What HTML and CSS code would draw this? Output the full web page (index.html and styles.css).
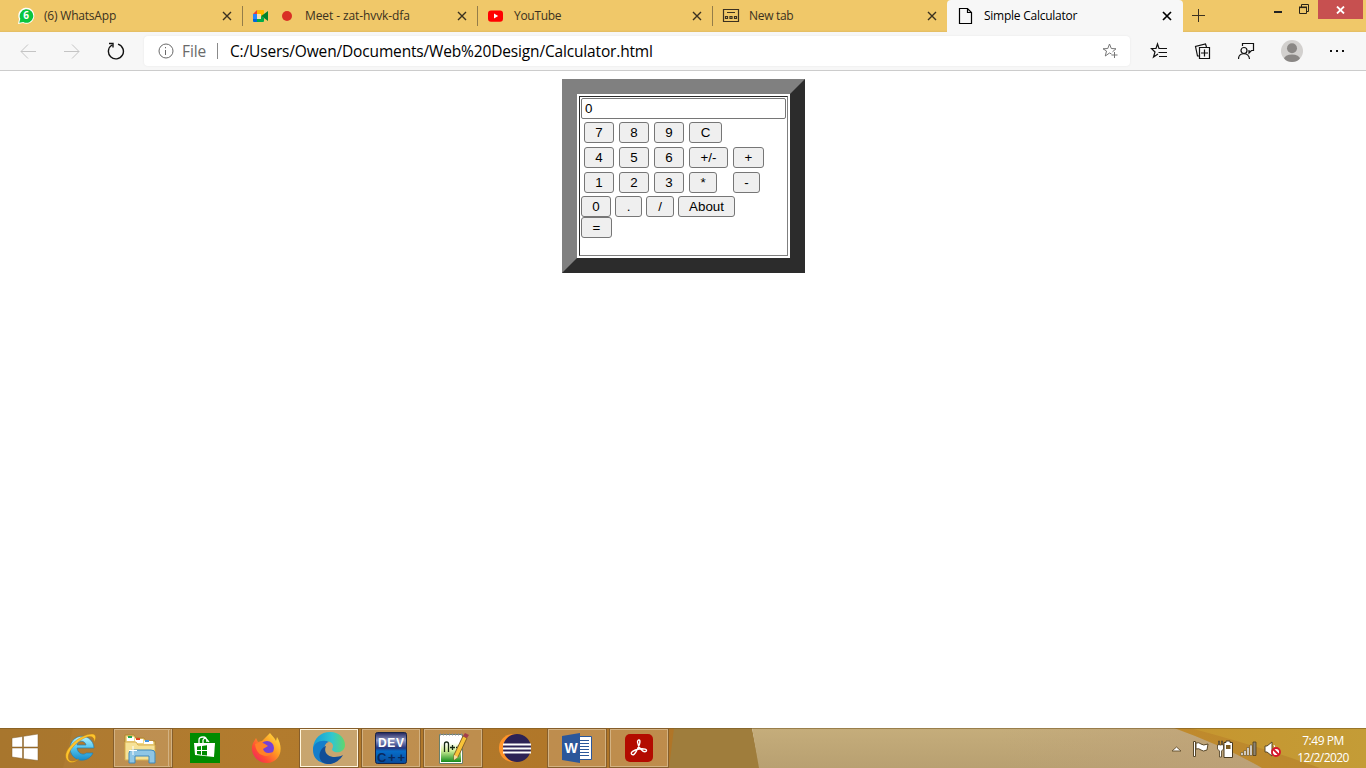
FILE: index.html
```html
<!DOCTYPE html>
<html lang="en">
<head>
<meta charset="utf-8">
<title>Simple Calculator</title>
<link rel="stylesheet" href="styles.css">
</head>
<body>
<header class="tabs">
  <div class="tab">
    <svg class="fav" width="18" height="18" viewBox="0 0 18 18"><path d="M1 17l1-5A8 8 0 1 1 6 16z" fill="#fff"/><path d="M2.3 15.8l1-4A6.8 6.8 0 1 1 6.3 15z" fill="#09c53e"/><text x="9" y="12.3" text-anchor="middle" class="badge">6</text></svg>
    <span class="title t1">(6) WhatsApp</span>
    <svg class="close" width="10" height="10" viewBox="0 0 10 10"><path d="M1 1l8 8M9 1L1 9"/></svg>
  </div>
  <div class="tab meet">
    <svg class="fav" width="18" height="18" viewBox="0 0 18 18"><path d="M1 7l4-4v4z" fill="#ea4335"/><path d="M1 7h4v5H1z" fill="#2684fc"/><path d="M1 12h4v3H2q-1 0-1-1z" fill="#0066da"/><path d="M5 3h6q1 0 1 1v3L9 10V7H5z" fill="#ffba00"/><path d="M5 12h4V9l3 2v3q0 1-1 1H5z" fill="#00ac47"/><path d="M12 7l4-3v10l-4-3-3-2z" fill="#00832d"/><path d="M5 7h4v5H5z" fill="#f4deb0"/></svg>
    <i class="record"></i>
    <span class="title t2">Meet - zat-hvvk-dfa</span>
    <svg class="close" width="10" height="10" viewBox="0 0 10 10"><path d="M1 1l8 8M9 1L1 9"/></svg>
  </div>
  <div class="tab">
    <svg class="fav" width="18" height="18" viewBox="0 0 18 18"><rect x="1" y="3.5" width="15" height="11.2" rx="3" fill="#f00"/><path d="M7 6.5l4.2 2.6L7 11.6z" fill="#fff"/></svg>
    <span class="title t3">YouTube</span>
    <svg class="close" width="10" height="10" viewBox="0 0 10 10"><path d="M1 1l8 8M9 1L1 9"/></svg>
  </div>
  <div class="tab">
    <svg class="fav" width="18" height="18" viewBox="0 0 18 18" fill="none" stroke="#3b3120"><path stroke-width="1.2" d="M1.500 2.500h15v12h-15zM5 5.500h8M3.500 9.500h2v2h-2zM8 9.500h2v2H8zM12.500 9.500h2v2h-2z"/></svg>
    <span class="title t4">New tab</span>
    <svg class="close" width="10" height="10" viewBox="0 0 10 10"><path d="M1 1l8 8M9 1L1 9"/></svg>
  </div>
  <div class="tab active">
    <svg class="fav" width="18" height="18" viewBox="0 0 18 18" fill="none" stroke="#000" stroke-width="1.2"><path d="M2.500 1.500h8l4 4v11h-12zM10.500 1.500v4h4"/></svg>
    <span class="title t5">Simple Calculator</span>
    <svg class="close" width="10" height="10" viewBox="0 0 10 10"><path d="M1 1l8 8M9 1L1 9"/></svg>
  </div>
  <svg class="plus" width="13" height="13" viewBox="0 0 13 13"><path d="M6.500 0v13M0 6.500h13" stroke="#3b3120"/></svg>
  <div class="window">
    <svg width="8" height="14" viewBox="0 0 8 14"><path d="M0 11h8v2H0z" fill="#222"/></svg>
    <svg width="11" height="11" viewBox="0 0 11 11" fill="none" stroke="#2a2418"><path d="M.5 3.500h7v6h-7zM2.500 3V.5h7v7H8"/><path d="M0 3.300h8" stroke-width="1.600"/></svg>
    <div class="shut"><svg width="9" height="8" viewBox="0 0 9 8"><path d="M1 .5l7 7M8 .5l-7 7" stroke="#fff" stroke-width="1.800"/></svg></div>
  </div>
</header>
<nav class="toolbar">
  <svg class="back" width="16" height="16" viewBox="0 0 16 16"><path d="M16 8.500H1M8 1.500l-7 7 7 7"/></svg>
  <svg class="forward" width="16" height="16" viewBox="0 0 16 16"><path d="M0 8.500h15M8 1.500l7 7-7 7"/></svg>
  <svg class="reload" width="18" height="18" viewBox="0 0 18 18"><path d="M11 2.200A7.500 7.500 0 1 1 5 3M2 1.500h4v4"/></svg>
  <div class="address">
    <svg width="16" height="16" viewBox="0 0 16 16" fill="none" stroke="#6a6a6a"><circle cx="8" cy="8" r="7"/><path d="M7.500 7v5M7.500 4v1.300"/></svg>
    <span class="scheme">File</span><i></i><span class="url">C:/Users/Owen/Documents/Web%20Design/Calculator.html</span>
    <svg class="star" width="16" height="16" viewBox="0 0 16 16" fill="none" stroke="#767676"><path d="M9.500 11L7.500 10l-4.200 3 1.200-5L1 5.800l4.800-.3L7.500 1l1.800 4.500 4.700.3-3.500 3M12.500 9v6M9.500 12h6"/></svg>
  </div>
  <div class="actions">
    <svg width="18" height="18" viewBox="0 0 18 18"><path d="M8 12L3.500 15 5 10 1.500 6.500H6l1.500-4.500L9 6.500h8M8.500 10.500H17M9 14.500h8"/></svg>
    <svg width="18" height="18" viewBox="0 0 18 18"><path d="M5.500 5.500h10v11h-10zM10.500 7.500v7M7 11h7M5 14L3.500 14 1.500 4.500l10-2.500 1 3"/></svg>
    <svg width="18" height="18" viewBox="0 0 18 18"><circle cx="6" cy="8.500" r="3"/><path d="M.5 17c0-7 10.500-7 11 0M4.500 4V1.500h11v7h-2l-2.500 2.500v-3"/></svg>
    <svg class="avatar" width="22" height="22" viewBox="0 0 22 22"><defs><clipPath id="face"><circle cx="11" cy="11" r="11"/></clipPath></defs><circle cx="11" cy="11" r="11" fill="#d2d0ce"/><g clip-path="url(#face)" fill="#8a8785"><circle cx="11" cy="8.300" r="5"/><ellipse cx="11" cy="19" rx="8" ry="4.500"/></g></svg>
    <svg class="more" width="16" height="4" viewBox="0 0 16 4"><path d="M1 1h2v2H1zM7 1h2v2H7zM13 1h2v2h-2z"/></svg>
  </div>
</nav>
<main>
  <form class="calculator">
    <div class="cell">
      <input class="display" type="text" value="0">
      <div class="keys"><button type="button" class="digit">7</button><button type="button" class="digit">8</button><button type="button" class="digit">9</button><button type="button" class="clear">C</button></div>
      <div class="keys"><button type="button" class="digit">4</button><button type="button" class="digit">5</button><button type="button" class="digit">6</button><button type="button" class="sign">+/-</button><button type="button" class="add">+</button></div>
      <div class="keys"><button type="button" class="digit">1</button><button type="button" class="digit">2</button><button type="button" class="digit">3</button><button type="button" class="times">*</button><button type="button" class="minus">-</button></div>
      <div class="bottom"><button type="button" class="digit">0</button><button type="button" class="dot">.</button><button type="button" class="divide">/</button><button type="button" class="about">About</button></div>
      <button type="button" class="add">=</button>
    </div>
  </form>
</main>
<footer class="taskbar">
  <svg class="wallpaper" width="1366" height="40" viewBox="0 0 1366 40">
    <defs>
      <linearGradient id="wood"><stop offset="0" stop-color="#ad7a32"/><stop offset=".4" stop-color="#b27b2d"/><stop offset="1" stop-color="#b07527"/></linearGradient>
      <linearGradient id="sand" x2="0" y2="1"><stop offset="0" stop-color="#c5ad7b"/><stop offset="1" stop-color="#b8a071"/></linearGradient>
      <linearGradient id="rose"><stop offset="0" stop-color="#bda079" stop-opacity="0"/><stop offset="1" stop-color="#bda17a"/></linearGradient>
      <linearGradient id="edge"><stop offset="0" stop-color="#c08a2c"/><stop offset="1" stop-color="#b9882f"/></linearGradient>
      <linearGradient id="gold"><stop offset="0" stop-color="#c6962f"/><stop offset="1" stop-color="#c49c37"/></linearGradient>
    </defs>
    <path fill="url(#wood)" d="M0 0h680v40H0z"/><path fill="#a06c25" opacity=".3" d="M0 0h73L63 40H0z"/>
    <path fill="#9f7d3c" d="M674 0h78l8 40h-91z"/><path fill="url(#sand)" d="M752 0h614v40H759z"/><path fill="url(#rose)" d="M1000 0h366v40h-366z"/>
    <path fill="url(#edge)" d="M1174 0h192v40h-104q-38-22-88-40z"/><path fill="url(#gold)" d="M1190 0h176v40h-46q-55-20-130-40z"/>
    <path d="M0 .5h1366" stroke="#70521f" opacity=".5"/>
  </svg>
  <div class="apps">
    <div class="start"><svg width="28" height="28" viewBox="0 0 28 28"><path d="M1 4l10.500-1.500V13H1zM12.500 2.300L27 0v13H12.500zM1 14h10.500v10.500L1 23zM12.500 14H27v12.500L12.500 24.700z" fill="#fff" stroke="#815c29" stroke-width=".5"/></svg></div>
    <div class="app"><svg width="34" height="34" viewBox="0 0 34 34"><defs><linearGradient id="ie" x2="0" y2="1"><stop stop-color="#b7f4ff"/><stop offset=".5" stop-color="#52c4ee"/><stop offset="1" stop-color="#188bc9"/></linearGradient></defs><path d="M29 22A12 12 0 1 1 30 17H13c1 7 8 7 9 5zM13 14h9c-1-5-8-5-9 0z" fill="url(#ie)" stroke="#267ead" stroke-width=".7" fill-rule="evenodd"/><path d="M4 30C-5 22 15 3 28 3c5 0 4 5 2 8 1-7-6-7-13-2C8 15 2 24 5 29q3 3 10-1-7 6-11 2z" fill="#ffc52c" stroke="#b67a12" stroke-width=".4"/></svg></div>
    <div class="app open stack"><svg width="34" height="34" viewBox="0 0 34 34"><path d="M2 4h9l2 3h8l2 3h9v18H2z" fill="#efd887" stroke="#b1852c"/><path d="M4 6h7v4H4zM12 8h8v4h-8zM21 10h9v3h-9z" fill="#fff"/><path d="M5 5h4v2H5z" fill="#26a950"/><path d="M13 7h4v2h-4z" fill="#df4321"/><path d="M22 9h4v2h-4z" fill="#4193df"/><path d="M2 11h11l2 3h17v15H2z" fill="#f6e296" stroke="#d7ae50"/><path d="M6 32V22q0-3 4-3h18q4 0 4 3v10h-6v-7H12v7z" fill="#8fc6e5" stroke="#3f87b9"/><path d="M10 15v9M6 19.500h8" stroke="#fff"/></svg></div>
    <div class="app"><svg width="30" height="30" viewBox="0 0 30 30"><path fill="#008b00" d="M0 0h30v30H0z"/><path d="M4 10h21l-1 14-19-2z" fill="#fff"/><path d="M9 10V7q0-3 4-3t4 5M13 10V7q2-4 6 2" fill="none" stroke="#fff" stroke-width="1.300"/><path d="M7 13.500l4-.5v4H7zM12 12.900l5-.6V17h-5zM7 18h4v3.700L7 21zM12 18h5v4.500l-5-.5z" fill="#008b00"/></svg></div>
    <div class="app"><svg width="34" height="34" viewBox="0 0 34 34"><defs><linearGradient id="fox" x1="1" x2="0" y2="1"><stop stop-color="#fff14d"/><stop offset=".4" stop-color="#ff9c22"/><stop offset=".7" stop-color="#ff4b35"/><stop offset="1" stop-color="#e71874"/></linearGradient></defs><path d="M3 12l3-5 2 4 4-1 8-8c2 3 5 5 6 8l1-4c8 13 2 26-10 26C6 32-1 21 3 12z" fill="url(#fox)"/><circle cx="17" cy="17" r="7" fill="#7542d5"/><path d="M5 13q6-3 10 0l3 2-5 3q2 6 10 3-4 6-11 3-6-2-7-11z" fill="#ff8128"/></svg></div>
    <div class="app open focused"><svg width="34" height="34" viewBox="0 0 34 34"><defs><linearGradient id="ed"><stop stop-color="#159bd7"/><stop offset=".6" stop-color="#31c7cf"/><stop offset="1" stop-color="#61d76b"/></linearGradient></defs><path d="M1 17C2 7 9 1 18 1c10 0 15 7 15 13 0 7-8 9-12 6-2-2 0-2 0-5 0-4-6-6-11-3-4 2-8 5-9 9z" fill="url(#ed)"/><path d="M1 19c0-8 10-11 16-8-6 1-8 14 3 19q-4 4-9 2C4 30 1 25 1 19z" fill="#147ecb"/><path d="M14 15c-4 9 7 14 17 9-4 7-13 12-21 7-5-5-2-14 4-16z" fill="#124d96"/></svg></div>
    <div class="app open"><svg width="32" height="32" viewBox="0 0 32 32"><defs><linearGradient id="dev" x2="0" y2="1"><stop stop-color="#21225a"/><stop offset=".25" stop-color="#8d97c4"/><stop offset=".5" stop-color="#27357c"/><stop offset=".6" stop-color="#066dc9"/><stop offset="1" stop-color="#084a99"/></linearGradient></defs><rect x=".5" y=".5" width="31" height="31" rx="2" fill="url(#dev)" stroke="#182445"/><text x="16" y="15" class="dev" textLength="26">DEV</text><text x="16" y="30" class="cpp" textLength="28">C++</text></svg></div>
    <div class="app open"><svg width="34" height="34" viewBox="0 0 34 34"><defs><linearGradient id="leaf" x2="0" y2="1"><stop stop-color="#fff"/><stop offset=".4" stop-color="#d4f09a"/><stop offset="1" stop-color="#128b1b"/></linearGradient></defs><path d="M3.500 3.500h23v29h-23z" fill="#fff" stroke="#697f6b"/><path d="M5 12h20v19H5z" fill="url(#leaf)"/><path d="M4 3.500h23" stroke="#889" stroke-width="2" stroke-dasharray="1 2"/><path d="M8.500 21v-8q0-2 2-2t2 2v8M14 16.500h5M16.500 14v5M20 16.500h5M22.500 14v5" stroke="#172817" fill="none" stroke-width="1.300"/><path d="M18 29v-5L27 5l4 2-9 19z" fill="#f9c438" stroke="#896329"/><path d="M18 29v-5l4 2z" fill="#f5dba2"/><path d="M27 5l2-3 4 2-2 3z" fill="#a43e4b"/></svg></div>
    <div class="app"><svg width="34" height="34" viewBox="0 0 34 34"><circle cx="15" cy="17" r="14" fill="#ff9429"/><circle cx="19" cy="17" r="14" fill="#2c2255"/><path d="M5 13.500h28M5 17.500h28M5 21.500h28" stroke="#fff" stroke-width="2"/></svg></div>
    <div class="app open"><svg width="32" height="32" viewBox="0 0 32 32"><path d="M17 4.500h13.500v23H17z" fill="#fff" stroke="#2b579a"/><path d="M19 8.500h9M19 11.500h9M19 14.500h9M19 17.500h9M19 20.500h9M19 23.500h9" stroke="#2b579a"/><path d="M1 4l18-3v30L1 28z" fill="#2b579a"/><text x="10" y="20.500" class="word">W</text></svg></div>
    <div class="app open"><svg width="28" height="28" viewBox="0 0 28 28"><rect width="28" height="28" rx="5" fill="#b30b00"/><path d="M7 20.500c-2.500-2 2-4.500 7-5.500 5-.8 9 .5 7 2.400-3 1.600-8-4.400-8.500-9.400 0-3 3.500-3 2 2-1.500 4.500-5 12.500-7.500 10.500z" fill="none" stroke="#fff" stroke-width="1.400"/></svg></div>
  </div>
  <div class="tray">
    <svg width="9" height="6" viewBox="0 0 9 6"><path d="M0 5l4.500-4L9 5z" fill="#fff" stroke="#6b5635"/></svg>
    <svg width="18" height="18" viewBox="0 0 18 18"><path d="M1.500 1.500h2v15h-2zM4 3q3-1 5 1t7 0l-1 6q-4 2-6 0T4 9z" fill="#fff" stroke="#594829"/></svg>
    <svg width="18" height="18" viewBox="0 0 18 18"><path d="M2.500 1v4h-1v4l2 2v6h2v-6l2-2V5h-1V1h-1v4h-2V1z" fill="#fff" stroke="#4a3b20" stroke-width=".8"/><path d="M8 2.500h2V1h4v1.500h2.500v15H8z" fill="#fff" stroke="#4a3b20"/><path d="M10 5h4.500v4H10z" fill="#7d5c20"/></svg>
    <svg width="18" height="18" viewBox="0 0 18 18"><path d="M1 12.500h2v3H1zM4 10.500h2v5H4zM7 7.500h2v8H7zM10 5h2v10.500h-2z" fill="#fff" stroke="#5b4a2b" stroke-width=".6"/><path d="M13 2h3v13.500h-3z" fill="#8d8471" stroke="#4c3c20" stroke-width=".8"/></svg>
    <svg width="18" height="18" viewBox="0 0 18 18"><path d="M1 6h2l5-4v14l-5-4H1z" fill="#fff" stroke="#594829"/><path d="M10 5q3 4 0 8" fill="none" stroke="#fff"/><circle cx="12" cy="12" r="4" fill="#fff" stroke="#d71729" stroke-width="1.800"/><path d="M9 9l6 6" stroke="#d71729" stroke-width="1.800"/></svg>
    <div class="clock"><span class="time">7:49 PM</span><span class="date">12/2/2020</span></div>
  </div>
</footer>
</body>
</html>
```
FILE: styles.css
```css
* { box-sizing: border-box; }
body { margin: 0; width: 1366px; height: 768px; overflow: hidden; display: flex; flex-direction: column; background: #fff; font-family: "Open Sans", sans-serif; }
svg { display: block; flex-shrink: 0; }
.tabs { height: 32px; flex: none; display: flex; padding-left: 8px; background: linear-gradient(#f0c869 30px, #e2bc63); }
.tab { width: 235px; height: 32px; display: flex; align-items: center; padding: 0 11px 0 9px; position: relative; color: #3b3120; font-size: 12px; }
.tab:not(.active):not(:nth-child(4))::after { content: ""; position: absolute; right: 0; top: 6px; width: 1px; height: 20px; background: #947d49; }
.fav { margin-right: 9px; }
.badge { font: bold 10px "Open Sans", sans-serif; fill: #fff; }
.title { flex: 1; white-space: nowrap; line-height: 32px; }
.t1 { letter-spacing: -.2px; }
.t2 { letter-spacing: -.1px; }
.t3 { letter-spacing: -.3px; }
.t4 { letter-spacing: -.3px; }
.t5 { letter-spacing: -.25px; }
.close { stroke: #3b3120; stroke-width: 1.4; fill: none; }
.record { width: 10px; height: 10px; border-radius: 50%; background: #d93025; margin: 0 13px 0 3px; }
.active { width: 236px; background: #f7f7f7; color: #000; border-radius: 4px 4px 0 0; margin-left: -1px; padding-left: 10px; }
.active .close { stroke: #000; stroke-width: 1.7; }
.plus { margin: 9px 0 0 9px; }
.window { display: flex; align-items: flex-start; margin-left: auto; padding-right: 3px; }
.window > svg:nth-child(2) { margin: 4px 8px 0 17px; }
.shut { width: 45px; height: 19px; background: #c75050; display: grid; place-items: center; }
.toolbar { height: 39px; flex: none; display: flex; align-items: center; background: #f7f7f7; border-bottom: 1px solid #ccc; fill: none; stroke: #111; padding-left: 20px; }
.back, .forward { stroke: #c4c4c4; margin-right: 28px; }
.reload { stroke-width: 1.4; margin-right: 19px; margin-left: -1px; }
.address { width: 986px; height: 30px; display: flex; align-items: center; padding: 0 12px 0 14px; background: #fff; border-radius: 4px; box-shadow: 0 0 2px #e5e5e5; font-size: 15.5px; }
.scheme { color: #6a6a6a; width: 35px; margin-left: 8px; letter-spacing: -.1px; }
.address i { width: 1px; height: 16px; background: #8a8a8a; margin-right: 12px; }
.url { color: #000; letter-spacing: -.16px; white-space: nowrap; }
.star { margin-left: auto; }
.actions { flex: 1; display: flex; align-items: center; padding-left: 20px; gap: 26px; stroke-width: 1.2; }
.avatar { stroke: none; }
.actions .avatar { margin-left: -1px; }
.more { fill: #111; stroke: none; }
main { flex: 1; padding-top: 8px; }
.calculator { width: 243px; height: 194px; margin: 0 auto 0 562px; padding: 2px; border: 15px solid; border-color: #808080 #2c2c2c #2c2c2c #808080; }
.cell { height: 160px; border: 1px solid; border-color: #2c2c2c #808080 #808080 #2c2c2c; padding: 1px; display: flex; flex-direction: column; align-items: flex-start; }
.display { width: 205px; height: 21px; margin: 0 0 3px; padding: 1px 3px; border: 1px solid #767676; border-radius: 2px; font: 13.333px "Liberation Sans", sans-serif; }
.keys { display: flex; gap: 5px; padding-left: 3px; margin-bottom: 4px; }
.bottom { display: flex; gap: 4px; margin-top: -1px; }
button { width: 30px; height: 21px; padding: 0; border: 1px solid #767676; border-radius: 3px; background: #efefef; color: #000; font: 13.333px/19px "Liberation Sans", sans-serif; }
.clear { width: 33px; }
.sign { width: 39px; }
.add { width: 31px; }
.times { width: 28px; margin-right: 11px; }
.minus, .dot { width: 27px; }
.divide { width: 28px; }
.about { width: 57px; }
.taskbar { height: 40px; flex: none; display: flex; justify-content: space-between; position: relative; }
.wallpaper { position: absolute; inset: 0; }
.apps { position: relative; display: flex; gap: 4px; }
.start { width: 48px; padding: 6px 0 0 11px; }
.app { width: 58px; height: 40px; display: grid; place-items: center; }
.open { border: 1px solid #d3b282; outline: 1px solid #865e2b; outline-offset: 0; height: 38px; margin-top: 1px; background: #cfab7e70; }
.focused { border-color: #fff5dc; background: #d6c098a0; }
.stack { border-right: 4px double #d3b282; padding-right: 3px; }
.dev, .cpp, .word { font: bold 13px "Liberation Sans", sans-serif; fill: #fff; text-anchor: middle; }
.dev { font-size: 12px; }
.cpp { font-size: 13px; fill: #09295e; }
.word { font-size: 14px; }
.tray { position: relative; display: flex; align-items: center; gap: 6px; padding: 2px 16px 0 0; }
.tray > svg:first-child { margin-right: 5px; }
.clock { width: 54px; margin-left: 8px; display: flex; flex-direction: column; align-items: center; color: #fff; font-size: 12px; line-height: 17px; white-space: nowrap; }
.time { letter-spacing: -.45px; }
.date { letter-spacing: -.6px; }
```
